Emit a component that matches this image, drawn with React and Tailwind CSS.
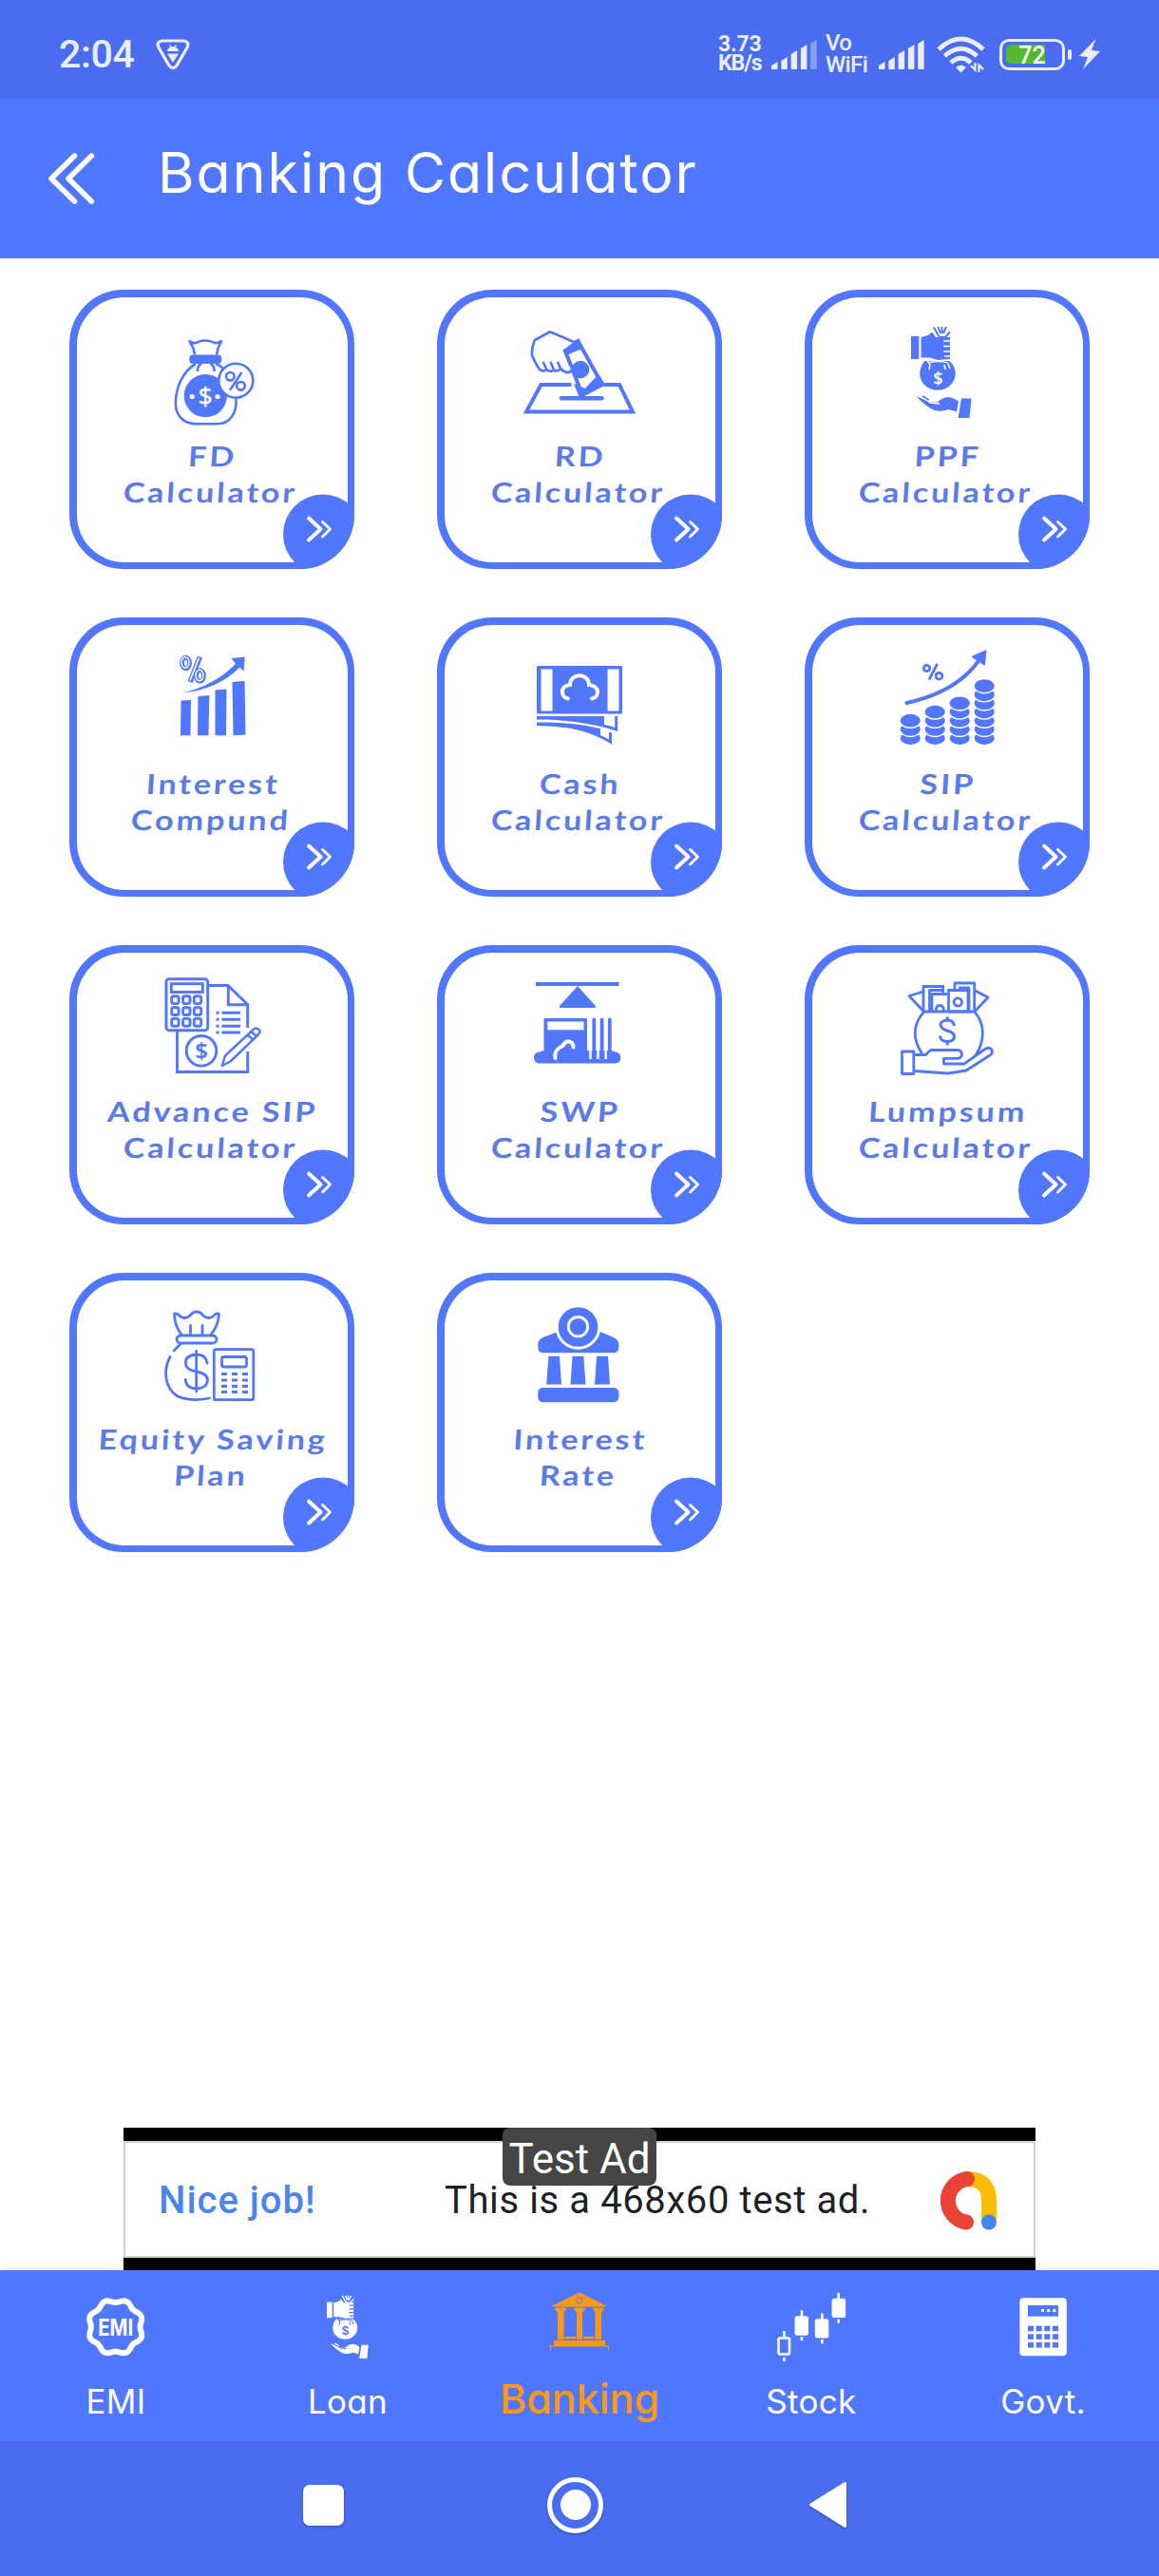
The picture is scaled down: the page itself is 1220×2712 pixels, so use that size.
import React, { useState } from "react";

const BagPercentIcon = () => (
  <g fill="none" stroke="currentColor" strokeWidth="2.6" strokeLinejoin="round">
    <path d="M42 38.5 Q41 31 36.5 24 Q41 28 46.5 24.5 Q53 22.5 59.5 24.5 Q65 28 70 24 Q66 31 65 38.5" />
    <rect x="36.3" y="38.5" width="34" height="9.5" rx="4" fill="currentColor" stroke="none" />
    <path d="M43 48 C29 56 21.8 74 21.8 90 C22 103 31 111.3 43 111.3 H66 C79 111 86.5 100 85.5 85" />
    <path d="M64 48 Q70 50 73 55 M45 56 Q44.5 50 49 48 M62.5 56 Q63 50 58.5 48" />
    <circle cx="53.3" cy="81.7" r="22.6" fill="currentColor" stroke="none" />
    <text x="53.3" y="90.5" textAnchor="middle" fontSize="26" fill="#fff" stroke="#fff" strokeWidth="0.4">$</text>
    <circle cx="39.2" cy="82.5" r="2.6" fill="#fff" stroke="none" />
    <circle cx="66" cy="82.5" r="2.6" fill="#fff" stroke="none" />
    <circle cx="85.3" cy="65.7" r="18" fill="#fff" />
    <circle cx="79.3" cy="61.3" r="4.3" />
    <circle cx="90.5" cy="71.3" r="4.3" />
    <path d="M91.5 57 L79 75.7" />
  </g>
);

const DepositBoxIcon = () => (
  <g fill="none" stroke="currentColor" strokeWidth="4">
    <path d="M51.5 70 H19.5 L4 98.5 H116 L102 70 H86" />
    <path d="M41 84.3 H83.5" strokeWidth="4.5" strokeLinecap="round" />
    <path d="M59 25 L84 70 L63 81 L44.5 33 Z" fill="#fff" />
    <path d="M59.5 21 L63 32 L44 40 L42 31 Z M60 84 L54 69 L66 74 L76 63 L81 60 L87 70 Z" fill="currentColor" stroke="none" />
    <circle cx="61" cy="54" r="9.3" fill="currentColor" stroke="none" />
    <path
      d="M54 25 L33 16 L29 14.3 L13 23 Q9.5 31 10 39 Q13 47 18 54 Q23 56.5 25.5 54 Q30 57 33 54.5 Q37 56.5 40 53 Q46 59 51 56 Q53 53 50 49 L43.5 33 Z"
      fill="#fff"
      stroke="none"
    />
    <path
      d="M54 25 L33 16 L29 14.3 L13 23 Q9.5 31 10 39 Q13 47 18 54 Q23 57 25.5 54 L21.5 46 M25.5 54 Q30 57.5 33 54.5 L29.5 46 M33 54.5 Q37 57 40 53 L37 46 M40 53 Q46 59 51 56 Q53 53 50 49 L43.5 33"
      strokeWidth="2.7"
      strokeLinejoin="round"
    />
  </g>
);

// cut is the colour of the gaps, so it has to follow the background
const HandsBagIcon = ({ cut = "#fff" }) => (
  <g fill="currentColor">
    <rect x="22" y="19" width="8.3" height="24" />
    <path d="M32.5 20 L40 18 L44 14.5 L48 20 H63 V43 L50 44 L42 41.5 H32.5 Z" />
    <path d="M46 9.5 L50 17 L52 20 H58 L63 14.5 M50.5 9 L53 16 M54.5 9 V16 M59 9 L56 16" fill="none" stroke="currentColor" strokeWidth="2" />
    <path d="M56 24 H64 M56 29.5 H64 M56 35 H64 M57 40 H64" stroke={cut} strokeWidth="1.6" />
    <path d="M36 45 H62 C67 49 69 54 68.7 59 C68 69 60 75.7 50 75.7 C40 75.7 31.5 69 31.2 59 C31.2 54 33 49 36 45 Z" />
    <path d="M41 54 L42 49 L39 44 M58 54 L57 49 M63 53 L61 48 M40 47 Q50 44 61 47" fill="none" stroke={cut} strokeWidth="1.6" />
    <text x="50.3" y="69.5" textAnchor="middle" fontSize="18" fontWeight="600" fill={cut}>$</text>
    <path d="M27.5 82 L36 86 L42 88.5 H50 Q55 83 62 83 Q68 84 72 87.5 L70 98.5 Q66 97 61 96 Q54 99 47 97 Q37 93 27.5 82 Z" />
    <path d="M34 82 L42 89 L52 90" fill="none" stroke={cut} strokeWidth="1.4" />
    <path d="M34 82 L41 86" fill="none" stroke="currentColor" strokeWidth="1.6" />
    <path d="M75 84.5 H85.5 L83.5 105 H71.5 Z" />
  </g>
);

const GrowthBarsIcon = () => (
  <g fill="currentColor">
    <path d="M27.5 57.5 L38 57 L37.5 94.3 H27 Z M45.5 53 L57.3 52 L56.5 94.3 H45 Z M63.5 46.5 L75.5 45.5 L75 94.3 H63.5 Z M81.5 38 L94.5 37 L95.5 93.5 L82.5 94.3 Z" />
    <path d="M29 49.5 Q62 42 85 19 L80.5 13 L94.8 11.5 L93.5 27 L89.5 22.5 Q66 46 29 49.5 Z" />
    <g fill="none" stroke="currentColor">
      <ellipse cx="32.5" cy="18" rx="4" ry="5.8" strokeWidth="4.8" />
      <ellipse cx="47.5" cy="31.5" rx="4" ry="5.8" strokeWidth="4.8" />
      <path d="M47.5 11.5 L37 38" strokeWidth="5.4" />
      <ellipse cx="32" cy="17.5" rx="4" ry="5.8" stroke="#fff" strokeWidth="1.4" />
      <ellipse cx="47" cy="31" rx="4" ry="5.8" stroke="#fff" strokeWidth="1.4" />
      <path d="M46.5 12.5 L37 36.5" stroke="#fff" strokeWidth="1.6" />
    </g>
  </g>
);

const CashIcon = () => (
  <g fill="currentColor">
    <rect x="15" y="21" width="90" height="50.5" rx="1" />
    <rect x="19.5" y="24.5" width="12" height="44" fill="#fff" />
    <rect x="89.5" y="24.5" width="12" height="44" fill="#fff" />
    <path
      d="M48 55.5 C40 54 39 42 50 41 C50 28 70 28 70 41 C82 42 81 54 73 55.5"
      fill="none"
      stroke="#fff"
      strokeWidth="4"
      strokeLinecap="round"
    />
    <path d="M15 74 H86 V83 Q62 77 15 77.5 Z" />
    <path d="M15 80.5 Q50 79.500 82 87 V94 Q50 84 15 84 Z" />
    <path d="M98.7 74 V88 Q72 79 30 76" fill="none" stroke="currentColor" strokeWidth="3" />
    <path d="M92.5 91 V101 Q66 85 30 82.5" fill="none" stroke="currentColor" strokeWidth="3" />
  </g>
);

const coinStacks = [
  { x: 21.3, count: 3 },
  { x: 47.2, count: 4 },
  { x: 73.2, count: 5 },
  { x: 99.2, count: 7 },
];

// coins are painted bottom first, the white outline leaves the gap between them
const CoinStacksIcon = () => (
  <g fill="currentColor">
    {coinStacks.map((s) =>
      Array.from({ length: s.count }, (_, i) => (
        <ellipse key={`${s.x}-${i}`} cx={s.x} cy={97 - i * 9.15} rx="11.3" ry="7.6" stroke="#fff" strokeWidth="1.4" />
      ))
    )}
    <path d="M17.5 60 Q72 48 95 13" fill="none" stroke="currentColor" strokeWidth="4" strokeLinecap="round" />
    <path d="M87 11.5 L100.5 5.5 L99 19.5 Z" stroke="currentColor" strokeWidth="2" strokeLinejoin="round" />
    <g fill="none" stroke="currentColor" strokeWidth="2.8">
      <circle cx="38.5" cy="23.5" r="3.2" />
      <circle cx="51.5" cy="31.7" r="3.4" />
      <path d="M49.5 19 L41 35.5" />
    </g>
  </g>
);

const ReportIcon = () => (
  <g fill="none" stroke="currentColor" strokeWidth="2.9">
    <rect x="12" y="5.7" width="43.7" height="54" rx="3" />
    <rect x="17.3" y="10.7" width="33" height="8.8" />
    {[27.7, 39.6, 51.3].map((y) =>
      [21.4, 33.3, 45].map((x) => (
        <rect key={`${x}-${y}`} x={x - 3.7} y={y - 3.9} width="7.4" height="7.8" rx="2" />
      ))
    )}
    <path d="M56 12.5 H77 L97.7 32.5 V57 M77.3 13 V32.7 H97.7 M97.7 82 V103.5 H23.5 V60" />
    <path d="M70.5 41.3 H90 M70.5 48.3 H90 M70.5 55.3 H90 M70.5 62 H90" strokeWidth="3" />
    <path d="M64.5 41.3 H67.5 M64.5 48.3 H67.5 M64.5 55.3 H67.5 M64.5 62 H67.5" />
    <circle cx="49" cy="81.3" r="15.8" />
    <text x="49" y="90" textAnchor="middle" fontSize="24" fontWeight="600" fill="currentColor" stroke="none">$</text>
    <path
      d="M70.8 97 L74 86.5 L103.5 59 Q107.5 56 110 59.5 Q111.5 62 108 65 L79.5 92.5 Z M97.5 64.5 L103.5 69.5 M101.5 61 L107 66"
      strokeLinejoin="round"
      strokeWidth="2.5"
    />
  </g>
);

const WithdrawIcon = () => (
  <g fill="currentColor">
    <rect x="14" y="9" width="87.5" height="4" />
    <path d="M58 13 L76.8 34 V36 H39 V34 Z" />
    <path d="M22.5 48 Q22.5 47 24 47 H66.5 Q68 47 68 48 V82.5 H22.5 Z" />
    <path d="M18 82.5 Q12 83 12 88.5 Q12 94.3 18 94.5 H97.5 Q103.3 94 103.3 88.5 Q103 83 97.5 82.5 L93.5 81 H22 Z" />
    <rect x="26.3" y="50.5" width="38.3" height="8.8" fill="#fff" />
    <path d="M75.3 48.5 V90 M83.6 48.5 V90 M91.8 48.5 V90" stroke="currentColor" strokeWidth="3.8" strokeLinecap="round" />
    <path d="M71.5 47 V90 M79.5 50 V90 M87.7 50 V90" stroke="#fff" strokeWidth="2.4" />
    <path d="M34.5 89 C33 81 38 78 42.5 76 C46 69 54 71 53.5 77.5" fill="none" stroke="#fff" strokeWidth="4" strokeLinecap="round" />
  </g>
);

const LumpsumIcon = () => (
  <g fill="none" stroke="currentColor" strokeWidth="2.8" strokeLinejoin="round">
    <path d="M35.7 40 H88.7 M35.7 40 C23 54 24 70 33.5 84 M88.7 40 C101 54 99 72 90 86" />
    <path d="M35.5 40 L20 23.5 L34.5 19 M89 40 L103 25 L89.5 18" />
    <path d="M35 40 V13.5 H55.7 V20 M41.5 40 V17.5 H55 M68 17 V10 H88.7 V40 M83 40 V15 H72" />
    <path d="M44 40 V21.5 H60 M61.5 40 V17.5 H82 V40 Z" />
    <circle cx="71.3" cy="30" r="4.2" />
    <path d="M48 40 Q48 33.5 52.3 33.5 Q56.5 33.5 56.5 40" />
    <path
      d="M60.2 45.5 V49 M67.5 55 Q66.5 49 60.2 49 Q53 49.5 53 54 Q54 58.5 60 60 Q67.5 62 67.5 66.5 Q67 71.5 60.2 71.5 Q53 71.5 52.5 65.5 M60.2 71.5 V75.5"
      strokeWidth="3"
    />
    <rect x="12.5" y="82" width="12.3" height="23.5" />
    <path d="M24.8 85.5 H37.5 L42.5 80.5 H71 Q75.5 81 75.5 85 Q75 89 71 89.3 H56.5 V95 H78 L100.5 79 Q105 77 107 80.5 Q108.5 84 105 86 L80 102 L61.5 105 L24.8 102.5" />
  </g>
);

const EquityIcon = () => (
  <g fill="none" stroke="currentColor" strokeWidth="2.8" strokeLinejoin="round" strokeLinecap="round">
    <path d="M27.5 34.5 Q20.5 25 20.5 13 Q24 12.5 27.5 16.5 Q33 19 37 15 Q40 11 44 11 Q48 11 51 15 Q55 19 60.5 16.5 Q64 12 67.5 13 Q67 25 59.5 34.5 M37.5 25.5 V34 M50 25.5 V34" />
    <rect x="23" y="36" width="42" height="8" rx="4" />
    <path d="M27 45 L20 52 M16 58.5 C8 74 11 92 24 100 Q38 106 57.5 102" />
    <path d="M43.7 52.5 V95 M55 65 Q54 56 43.7 56 Q32 57 32.3 65 Q32.5 72 43.7 74 Q55.5 76 55.5 83 Q55 91.5 43.7 92 Q32.5 91.5 32.3 82.5" />
    <rect x="62.3" y="50.7" width="41.5" height="53" rx="2" />
    <rect x="70.5" y="58.5" width="26" height="10.5" rx="2" />
    <path
      d="M70 76.5 H76 M81 76.5 H87 M92 76.5 H98 M70 83 H76 M81 83 H87 M92 83 H98 M70 89.3 H76 M81 89.3 H87 M92 89.3 H98 M70 95.5 H76 M81 95.5 H87 M92 95.5 H98"
      strokeWidth="3.2"
      strokeLinecap="butt"
    />
  </g>
);

const RateIcon = () => (
  <g fill="currentColor">
    <path d="M36 32.5 H83 L96 38 Q101.3 40.5 101.3 45 V49 Q101 54.3 95.5 54.3 H22 Q16.5 54.3 16.3 49 V45 Q16.5 40.5 21.5 38 Z" />
    <circle cx="58.5" cy="27" r="22.3" stroke="#fff" strokeWidth="3" />
    <circle cx="58.5" cy="26.7" r="10.2" fill="none" stroke="#fff" strokeWidth="2.8" />
    <path d="M27.5 57.7 H39 L41 87.5 H25.2 Z M52.5 57.7 H64.3 L66.5 87.5 H50.5 Z M78 57.7 H90 L92 87.5 H76 Z" />
    <rect x="16.3" y="91" width="85" height="15.3" rx="5" />
  </g>
);

const calculators = [
  { lines: ["FD", "Calculator"], Icon: BagPercentIcon },
  { lines: ["RD", "Calculator"], Icon: DepositBoxIcon },
  { lines: ["PPF", "Calculator"], Icon: HandsBagIcon },
  { lines: ["Interest", "Compund"], Icon: GrowthBarsIcon },
  { lines: ["Cash", "Calculator"], Icon: CashIcon },
  { lines: ["SIP", "Calculator"], Icon: CoinStacksIcon },
  { lines: ["Advance SIP", "Calculator"], Icon: ReportIcon },
  { lines: ["SWP", "Calculator"], Icon: WithdrawIcon },
  { lines: ["Lumpsum", "Calculator"], Icon: LumpsumIcon },
  { lines: ["Equity Saving", "Plan"], Icon: EquityIcon },
  { lines: ["Interest", "Rate"], Icon: RateIcon },
];

const CalculatorCard = ({ lines, Icon }) => (
  <button className="relative h-[294px] w-[300px] overflow-hidden rounded-[57px] bg-[#5277ff] p-[7.5px]">
    <div className="flex h-full flex-col items-center rounded-[50px] bg-white pt-[22.5px]">
      <svg className="h-[120px] w-[120px] shrink-0 text-[#5277ff]" viewBox="0 0 120 120">
        <Icon />
      </svg>
      <div className="mt-[6px] -skew-x-3 scale-x-118 font-[Lato] text-[29px] leading-[37.5px] font-bold tracking-[2.4px] whitespace-nowrap text-[#5b7be9]">
        {lines.map((line) => (
          <p key={line}>{line}</p>
        ))}
      </div>
    </div>
    <svg
      className="absolute top-[215px] left-[225px] h-[85px] w-[85px]"
      viewBox="0 0 85 85"
      fill="none"
      stroke="#fff"
      strokeLinecap="round"
      strokeLinejoin="round"
    >
      <circle cx="42" cy="42.5" r="42" fill="#5277ff" stroke="none" />
      <path d="M27 25.5 L39.5 37 L27 48.5" strokeWidth="4" />
      <path d="M41.5 29.5 L49.5 37 L41.5 45" strokeWidth="2.8" />
    </svg>
  </button>
);

const SignalBars = ({ level = 5 }) => (
  <svg className="h-[31px] w-[48px]" viewBox="0 0 48 31" fill="currentColor">
    {[8, 13, 20, 26, 31].map((h, i) => (
      <path
        key={h}
        d={`M${i * 10.3} ${31 - h + 4} L${i * 10.3 + 6.5} ${31 - h} V30 Q${i * 10.3 + 6.5} 31 ${i * 10.3 + 5.5} 31 H${i * 10.3 + 1} Q${i * 10.3} 31 ${i * 10.3} 30 Z`}
        opacity={i < level ? 1 : 0.4}
      />
    ))}
  </svg>
);

const StatusBar = () => (
  <div className="flex h-[104px] items-center bg-[#496cf0] pt-[10px] pr-[62px] pl-[62px] font-[Roboto] text-[#e9eefe]">
    <span className="w-[80px] text-[41px] leading-none font-medium tracking-[-0.3px]">2:04</span>
    <svg className="ml-[22px] h-[32px] w-[36px]" viewBox="0 0 36 32">
      <path d="M7 2 H29 Q36 3 33 9 L22 28 Q18 33 14 28 L3 9 Q0 3 7 2 Z" fill="none" stroke="currentColor" strokeWidth="3.2" />
      <path d="M12 13 Q13 8 18 8 Q23 8 24 13 Z M12 15.5 H24 L18 25 Z" fill="currentColor" />
      <path d="M14.5 6 L16 9 M21.5 6 L20 9" stroke="currentColor" strokeWidth="1.2" />
    </svg>
    <div className="ml-auto w-[46px] text-[23px] leading-[20px] font-bold tracking-[-0.2px]">
      <p>3.73</p>
      <p className="tracking-[-1px]">KB/s</p>
    </div>
    <div className="ml-[10px]">
      <SignalBars level={4} />
    </div>
    <div className="ml-[9px] w-[46px] text-[24px] leading-[23px] font-medium tracking-[-0.6px]">
      <p>Vo</p>
      <p>WiFi</p>
    </div>
    <div className="ml-[10px]">
      <SignalBars />
    </div>
    <svg className="ml-[13px] h-[39px] w-[51px]" viewBox="0 0 51 39" fill="none" stroke="currentColor" strokeWidth="5">
      <path d="M2 14 Q25 -8 49 14 M8.5 21 Q25 5.5 42.5 21 M15 28 Q25 18.5 36 28" />
      <path d="M20 33 Q25.5 28 31 33 L25.5 38.5 Z" fill="currentColor" stroke="none" />
      <path d="M36 31 L40.500 35.500 V28 M44.500 38 V30.500 L49 35" strokeWidth="2.2" />
    </svg>
    <div className="ml-[15px] flex items-center">
      <div className="relative h-[33px] w-[69px] rounded-[10px] border-[3px] border-[#e9eefe] p-[3.5px]">
        <div className="h-full w-[41px] rounded-l-[5px] bg-[#54b92c]" />
        <span className="absolute inset-0 flex items-center justify-center pt-[2px] text-[25px] leading-none font-medium text-white">72</span>
      </div>
      <div className="ml-[3px] h-[11px] w-[4px] rounded-[2px] bg-[#e9eefe]" />
    </div>
    <svg className="ml-[8px] h-[32px] w-[22px]" viewBox="0 0 22 32" fill="currentColor">
      <path d="M17.5 0 L0 18 L9 19 L4 32 L22 13 L13 12 Z" />
    </svg>
  </div>
);

const AppBar = () => (
  <header className="flex h-[168px] items-center bg-[#5077ff] text-white">
    <svg
      className="ml-[49px] h-[60px] w-[52px]"
      viewBox="0 0 52 60"
      fill="none"
      stroke="currentColor"
      strokeWidth="5.6"
      strokeLinecap="round"
      strokeLinejoin="round"
    >
      <path d="M29.5 6 L5 30 L29.5 54 M47.3 6 L23 30 L47.3 54" />
    </svg>
    <h1 className="ml-[65px] pb-[14px] font-[Inter] text-[59px] leading-none tracking-[2px] [font-feature-settings:'cv11']">
      Banking Calculator
    </h1>
  </header>
);

const TestAd = () => (
  <div className="relative mx-auto h-[150px] w-[960px] bg-black pt-[14px] pb-[13px]">
    <div className="flex h-full items-center border-2 border-[#ccd3d8] bg-white pt-[2px] pl-[35px] font-[Roboto] text-[40px]">
      <span className="w-[301px] font-medium tracking-[1px] text-[#4a84ee]">Nice job!</span>
      <span className="w-[519px] tracking-[0.6px] whitespace-nowrap text-[#202124]">This is a 468x60 test ad.</span>
      <svg className="h-[64px] w-[64px]" viewBox="0 0 64 64" fill="none" strokeWidth="16" strokeLinecap="round">
        <path d="M31 9 Q54 9 54 32 V52" stroke="#fbbc04" />
        <path d="M31 9 A23 23 0 0 0 30 54.5" stroke="#ea4335" />
        <circle cx="54" cy="54.5" r="8" fill="#4285f4" />
      </svg>
    </div>
    <div className="absolute top-0 left-[399px] flex h-[61px] w-[162px] items-center justify-center rounded-[8px] bg-[#454545] font-[Roboto] text-[44px] text-white">
      <span className="pt-[4px] whitespace-nowrap">Test Ad</span>
    </div>
  </div>
);

// eight-lobed seal outline
const sealPath =
  Array.from({ length: 96 }, (_, i) => {
    const a = (i / 96) * Math.PI * 2;
    const r = 27.5 - 1.7 * Math.cos(8 * a);
    return `${i ? "L" : "M"}${(39.7 + r * Math.cos(a)).toFixed(2)} ${(39.8 + r * Math.sin(a)).toFixed(2)}`;
  }).join(" ") + " Z";

const tabs = [
  {
    name: "EMI",
    icon: (
      <>
        <path d={sealPath} fill="none" stroke="currentColor" strokeWidth="6" />
        <text x="39.7" y="48.5" textAnchor="middle" fontSize="24" fontWeight="700" textLength="37" lengthAdjust="spacingAndGlyphs" fill="currentColor">
          EMI
        </text>
      </>
    ),
  },
  {
    name: "Loan",
    icon: (
      <g transform="translate(2.8 0.5) scale(0.69)">
        <HandsBagIcon cut="#5077ff" />
      </g>
    ),
  },
  {
    name: "Banking",
    icon: (
      <g fill="currentColor">
        <path d="M40 3.5 L68 17.5 V18.5 H11.5 V17.5 Z" />
        <ellipse cx="40" cy="11.7" rx="3" ry="3.3" fill="none" stroke="#9a8a83" strokeWidth="1.5" />
        <path d="M14.5 19.5 H26 V22 L23.5 24 V53 H17 V24 L14.5 22 Z M34.5 19.5 H45.5 V22 L43 24 V53 H37 V24 L34.5 22 Z M54.5 19.5 H65.5 V22 L63 24 V53 H56.5 V24 L54.5 22 Z" />
        <rect x="24.5" y="50" width="11.5" height="2.5" />
        <rect x="44" y="50" width="11.5" height="2.5" />
        <rect x="13" y="54" width="54" height="5.5" />
        <path d="M9.5 64 V59.8 H70.5 V64" fill="none" stroke="currentColor" strokeWidth="1.2" />
      </g>
    ),
  },
  {
    name: "Stock",
    icon: (
      <g fill="currentColor">
        <rect x="5.5" y="51.5" width="11.5" height="17" rx="1.5" fill="none" stroke="currentColor" strokeWidth="2.6" />
        <rect x="22.5" y="28.3" width="14.5" height="20.4" rx="2.5" />
        <rect x="43.8" y="31.2" width="14.5" height="20.4" rx="2.5" />
        <rect x="61.6" y="9.7" width="14.5" height="20.4" rx="2.5" />
        <path
          d="M11.4 44 V51 M11.4 71.7 V76 M30 22.3 V29 M30 50 V54 M51.3 25.5 V32 M51.3 53 V57.3 M68.7 4 V10 M68.7 31.5 V35.7"
          stroke="currentColor"
          strokeWidth="2.6"
        />
      </g>
    ),
  },
  {
    name: "Govt.",
    icon: (
      <g>
        <rect x="15.3" y="9.3" width="49.5" height="61" rx="4" fill="currentColor" />
        <rect x="24" y="17" width="32" height="11.7" fill="#5077ff" />
        <path d="M38 22.5 H41 M44.2 22.5 H47.2 M50.3 22.5 H53.3" stroke="currentColor" strokeWidth="3" />
        {[38.7, 47.3, 56].map((y) =>
          [24, 32.7, 41.3, 50].map((x) => (
            <rect key={`${x}-${y}`} x={x} y={y} width="6" height="5.6" fill="#5077ff" />
          ))
        )}
      </g>
    ),
  },
];

const BottomTabs = ({ active, onSelect }) => (
  <nav className="flex h-[180px] bg-[#5077ff] font-[Inter] text-white shadow-[0_0_10px_rgba(0,0,0,0.12)] [font-feature-settings:'cv11']">
    {tabs.map((tab) => (
      <button
        key={tab.name}
        onClick={() => onSelect(tab.name)}
        className={`flex w-[244px] flex-col items-center pt-[20px] ${active === tab.name ? "text-[#fb9a10]" : ""}`}
      >
        <svg className="h-[80px] w-[80px]" viewBox="0 0 80 80">
          {tab.icon}
        </svg>
        <span
          className={
            active === tab.name
              ? "mt-[10px] text-[43px] leading-[50px] font-medium"
              : "mt-[13px] text-[35px] leading-[50px] tracking-[0.3px]"
          }
        >
          {tab.name}
        </span>
      </button>
    ))}
  </nav>
);

const SystemNav = () => (
  <div className="flex h-[142px] items-center bg-[#496cf0] pb-[8px] pl-[319px]">
    <div className="h-[43px] w-[43px] rounded-[7px] bg-white shadow-[0_1px_3px_rgba(0,0,0,0.3)]" />
    <div className="ml-[214px] flex h-[59px] w-[59px] items-center justify-center rounded-full border-[5px] border-white shadow-[0_1px_3px_rgba(0,0,0,0.3)]">
      <div className="h-[32px] w-[32px] rounded-full bg-white" />
    </div>
    <svg
      className="ml-[216px] h-[50px] w-[41px] drop-shadow-[0_1px_1px_rgba(0,0,0,0.3)]"
      viewBox="0 0 41 50"
      fill="#fff"
      stroke="#fff"
      strokeWidth="3"
      strokeLinejoin="round"
    >
      <path d="M38.5 2.5 V47.5 L2.5 25 Z" />
    </svg>
  </div>
);

const App = () => {
  const [active, setActive] = useState("Banking");

  return (
    <div className="flex h-[2712px] w-[1220px] flex-col bg-white">
      <StatusBar />
      <AppBar />
      <main className="grid flex-1 grid-cols-[repeat(3,300px)] content-start justify-center gap-x-[87px] gap-y-[51px] pt-[33px]">
        {calculators.map((item) => (
          <CalculatorCard key={item.lines.join(" ")} {...item} />
        ))}
      </main>
      <TestAd />
      <BottomTabs active={active} onSelect={setActive} />
      <SystemNav />
    </div>
  );
};

export default App;
